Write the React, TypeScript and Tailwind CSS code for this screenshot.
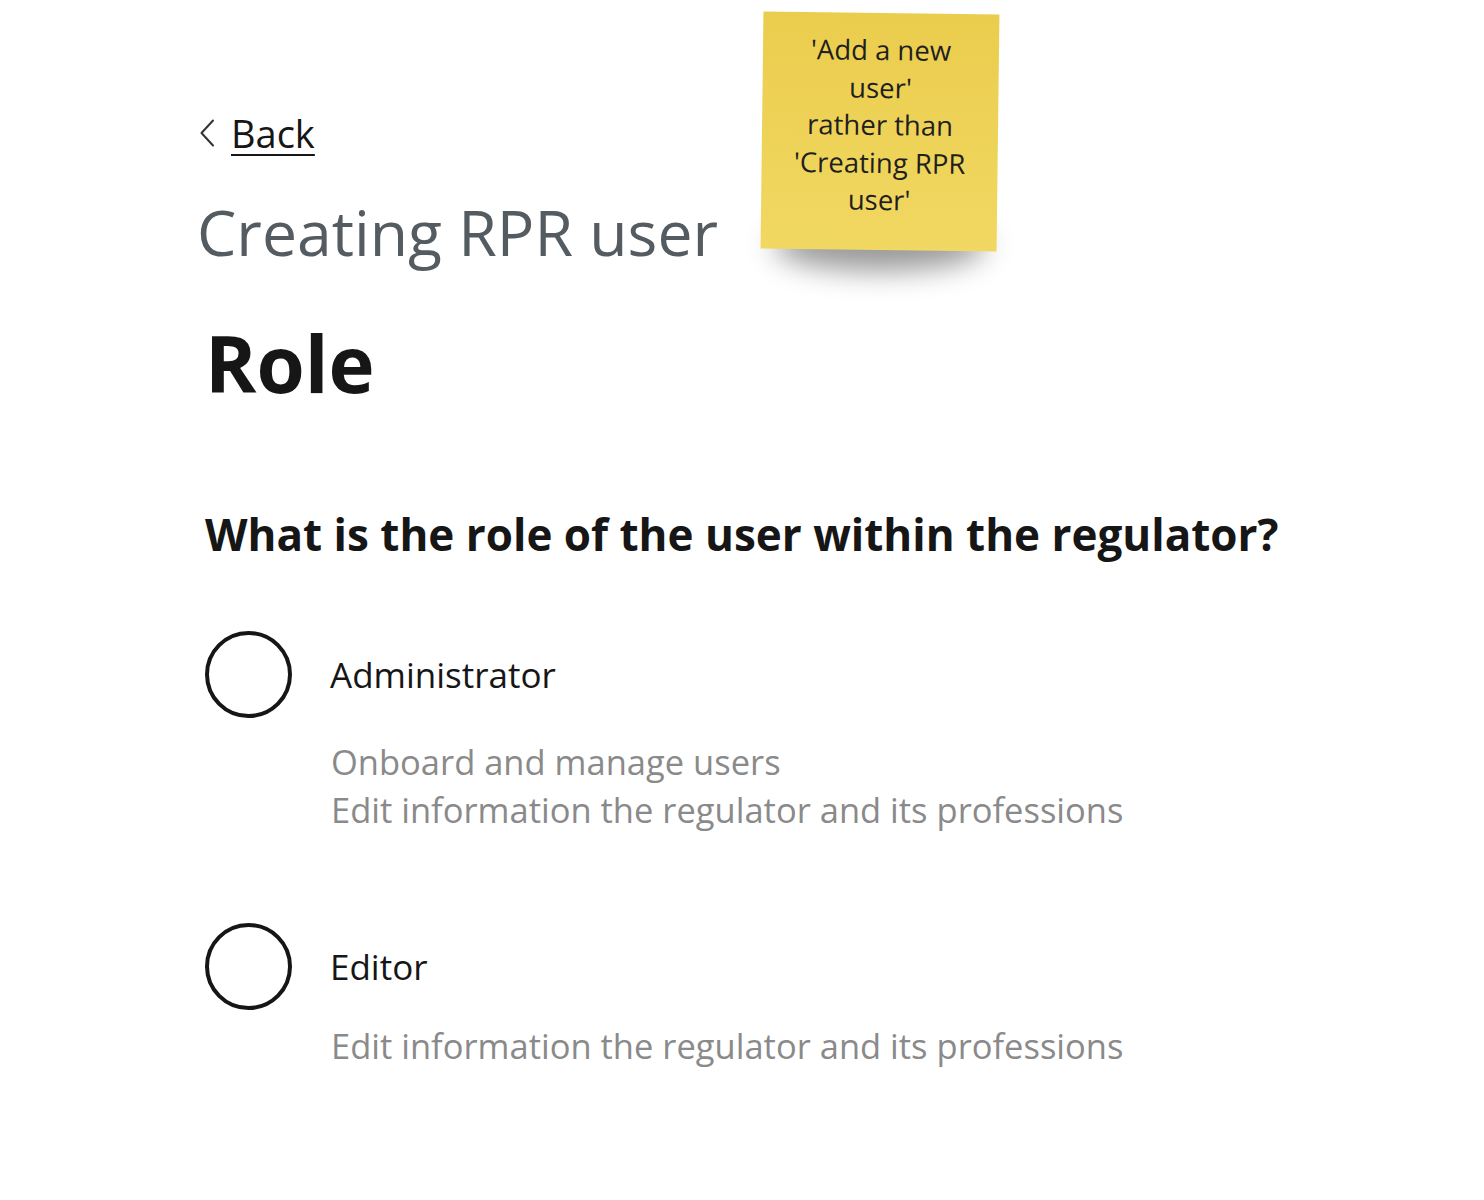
const ROLES = [
  {
    name: "Administrator",
    lines: ["Onboard and manage users", "Edit information the regulator and its professions"],
    descGap: "mt-[20px]",
  },
  {
    name: "Editor",
    lines: ["Edit information the regulator and its professions"],
    descGap: "mt-[12px]",
  },
];

const StickyNote = () => (
  <div className="absolute left-[762px] top-[13px] w-[236px]">
    <div className="absolute left-[12px] right-[12px] top-[206px] h-[52px] rounded-[50%] bg-black/40 blur-[14px]" />
    <div className="relative flex h-[237px] rotate-[0.7deg] flex-col items-center bg-gradient-to-b from-[#ebcd4d] to-[#f1d862] pt-[18px] text-center font-['Open_Sans',sans-serif] text-[27.5px] leading-[37.5px] text-[#1f1f1f]">
      <p>'Add a new</p>
      <p>user'</p>
      <p>rather than</p>
      <p>'Creating RPR</p>
      <p>user'</p>
    </div>
  </div>
);

const RoleOption = ({ name, lines, descGap }: { name: string; lines: string[]; descGap: string }) => (
  <div className="flex flex-col">
    <label className="flex items-center gap-[38px]">
      <span className="h-[87px] w-[87px] shrink-0 rounded-full border-[4px] border-[#161616]" />
      <span className="text-[35px] leading-[48px] text-[#161616]">{name}</span>
    </label>
    <div className={`${descGap} pl-[126px] text-[34.5px] leading-[48px] text-[#8a8a8a]`}>
      {lines.map((line) => (
        <p key={line}>{line}</p>
      ))}
    </div>
  </div>
);

export default function App() {
  return (
    <div className="relative min-h-[1200px] w-[1484px] bg-white font-['Open_Sans',sans-serif]">
      <StickyNote />

      <div className="flex flex-col pl-[197px] pt-[108px]">
        <a href="#" className="flex items-center gap-[16px] text-[#161616]">
          <svg width="16" height="28" viewBox="0 0 16 28" fill="none" className="ml-[2px]">
            <path d="M14 1.5 L2.5 14 L14 26.5" stroke="#333" strokeWidth="2" strokeLinecap="round" strokeLinejoin="round" />
          </svg>
          <span className="text-[38px] leading-[50px] underline decoration-[2px] underline-offset-[6px]">Back</span>
        </a>

        <h2 className="mt-[39px] text-[62.5px] leading-[70px] text-[#555c61]">Creating RPR user</h2>

        <h1 className="mt-[46px] pl-[8px] text-[78px] font-bold leading-[100px] text-[#161616]">Role</h1>

        <p className="mt-[96px] pl-[8px] text-[44px] font-bold leading-[50px] text-[#161616]">
          What is the role of the user within the regulator?
        </p>

        <div className="mt-[72px] flex flex-col gap-[89px] pl-[8px]">
          {ROLES.map((role) => (
            <RoleOption key={role.name} name={role.name} lines={role.lines} descGap={role.descGap} />
          ))}
        </div>
      </div>
    </div>
  );
}
